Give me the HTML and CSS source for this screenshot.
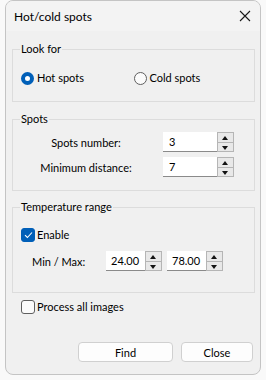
FILE: index.html
```html
<!DOCTYPE html>
<html lang="en">
  <head>
    <meta charset="UTF-8" />
    <title>Hot/cold spots</title>
    <link rel="stylesheet" href="styles.css">
  </head>
  <body>
    <div class="window">
      <div class="titlebar">
        <span class="title">Hot/cold spots</span>
        <svg class="close" width="12" height="12" viewBox="0 0 12 12">
          <path d="M1 1 L11 11 M11 1 L1 11" stroke="#1a1a1a" stroke-width="1.1" fill="none" />
        </svg>
      </div>

      <div class="content">
        <fieldset class="group look">
          <legend>Look for</legend>
          <div class="radios">
            <label class="radio checked"><span class="dot"></span>Hot spots</label>
            <label class="radio"><span class="dot"></span>Cold spots</label>
          </div>
        </fieldset>

        <fieldset class="group spots">
          <legend>Spots</legend>
          <div class="field-row">
            <span class="field-label">Spots number:</span>
            <div class="spin wide"><span class="value">3</span><div class="arrows"><span class="up"></span><span class="down"></span></div></div>
          </div>
          <div class="field-row">
            <span class="field-label">Minimum distance:</span>
            <div class="spin wide"><span class="value">7</span><div class="arrows"><span class="up"></span><span class="down"></span></div></div>
          </div>
        </fieldset>

        <fieldset class="group temp">
          <legend>Temperature range</legend>
          <label class="check checked"><span class="box"><svg width="9" height="8" viewBox="0 0 9 8"><path d="M1 4.2 L3.4 6.5 L8 1.5" stroke="#fff" stroke-width="1.1" fill="none" /></svg></span>Enable</label>
          <div class="range-row">
            <span class="range-label">Min / Max:</span>
            <div class="spin"><span class="value">24.00</span><div class="arrows"><span class="up"></span><span class="down"></span></div></div>
            <div class="spin"><span class="value">78.00</span><div class="arrows"><span class="up"></span><span class="down"></span></div></div>
          </div>
        </fieldset>

        <label class="check process"><span class="box"></span>Process all images</label>

        <div class="buttons">
          <button class="btn find">Find</button>
          <button class="btn close-btn">Close</button>
        </div>
      </div>
    </div>
  </body>
</html>
```

FILE: styles.css
```css
body {
  margin: 0;
  background-color: #f9f9f9;
  font-family: Lato, "Noto Sans", sans-serif;
  font-size: 11px;
  color: #000;
}

.window {
  margin-left: 5px;
  width: 256px;
  height: 375px;
  box-sizing: border-box;
  border: 1px solid #c4c4c4;
  border-radius: 8px;
  background-color: #f0f0f0;
  overflow: hidden;
  display: flex;
  flex-direction: column;
}

.titlebar {
  height: 30px;
  flex: none;
  background-color: #f3f3f3;
  display: flex;
  align-items: center;
  justify-content: space-between;
  padding: 0 9px 0 8px;
}

.title {
  font-size: 12px;
}

.content {
  flex: 1;
  display: flex;
  flex-direction: column;
  padding: 10px 5px 12px 6px;
}

.group {
  margin: 0;
  padding: 0 8px;
  border: 1px solid #dcdcdc;
  border-radius: 0;
  min-width: 0;
}

.group legend {
  padding: 0 1px;
  margin-left: -1px;
  line-height: 16px;
}

.radios {
  display: flex;
  margin-top: 13px;
  padding-bottom: 15px;
}

.radio {
  display: flex;
  align-items: center;
  line-height: 16px;
  width: 116px;
}

.radio .dot {
  width: 11px;
  height: 11px;
  border: 1px solid #5f5f5f;
  border-radius: 50%;
  background-color: #fbfbfb;
  margin-right: 3px;
  flex: none;
}

.radio.checked .dot {
  border: 4px solid #005fb8;
  width: 5px;
  height: 5px;
  background-color: #fff;
}

.spots {
  margin-top: 9px;
  padding-bottom: 13px;
}

.field-row {
  display: flex;
  align-items: center;
  margin-top: 5px;
  padding-right: 12px;
}

.field-label {
  flex: 1;
  text-align: center;
  margin-right: 12px;
}

.spin {
  display: flex;
  height: 20px;
}

.spin .value {
  width: 39px;
  box-sizing: border-box;
  background-color: #fff;
  border-bottom: 1px solid #8a8a8a;
  padding-left: 5px;
  line-height: 19px;
}

.spin.wide .value {
  width: 54px;
  padding-left: 6px;
}

.arrows {
  width: 17px;
  display: flex;
  flex-direction: column;
  box-sizing: border-box;
  border: 1px solid #b5b5b5;
  background-color: #e8e8e8;
}

.arrows span {
  flex: 1;
  position: relative;
}

.arrows .up {
  border-bottom: 1px solid #b5b5b5;
}

.arrows span::after {
  content: "";
  position: absolute;
  left: 4px;
  top: 3px;
  border-left: 3.5px solid transparent;
  border-right: 3.5px solid transparent;
}

.arrows .up::after {
  border-bottom: 4px solid #111;
}

.arrows .down::after {
  top: 3px;
  border-top: 4px solid #111;
}

.temp {
  margin-top: 8px;
  padding-bottom: 21px;
}

.check {
  display: flex;
  align-items: center;
  line-height: 16px;
}

.temp .check {
  margin-top: 12px;
}

.check .box {
  width: 12px;
  height: 12px;
  border: 1px solid #5f5f5f;
  border-radius: 3px;
  background-color: #fbfbfb;
  margin-right: 2px;
  display: flex;
  align-items: center;
  justify-content: center;
  flex: none;
}

.check.checked .box {
  border-color: #005fb8;
  background-color: #005fb8;
}

.range-row {
  display: flex;
  align-items: center;
  margin-top: 8px;
  padding-left: 11px;
}

.range-label {
  width: 74px;
}

.range-row .spin + .spin {
  margin-left: 5px;
}

.process {
  margin-top: 6px;
  padding-left: 9px;
}

.buttons {
  margin-top: auto;
  display: flex;
  justify-content: flex-end;
  gap: 8px;
  padding-right: 2px;
}

.btn {
  height: 20px;
  font-family: inherit;
  font-size: 11px;
  background-color: #fdfdfd;
  border: 1px solid #d0d0d0;
  border-radius: 4px;
  padding: 0;
}

.find {
  width: 95px;
}

.close-btn {
  width: 72px;
}
```
